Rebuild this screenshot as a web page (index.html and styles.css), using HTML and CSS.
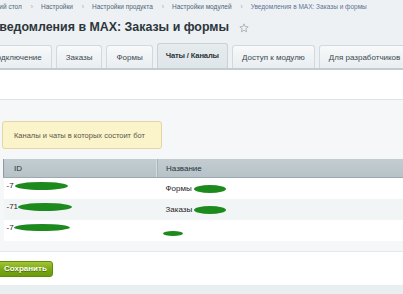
FILE: index.html
```html
<!DOCTYPE html>
<html lang="ru">
<head>
<meta charset="utf-8">
<title>Уведомления в MAX: Заказы и формы</title>
<link rel="stylesheet" href="styles.css">
</head>
<body>
<div class="page">
  <div class="breadcrumbs"><span class="crumb">Рабочий стол</span><span class="sep">›</span><span class="crumb">Настройки</span><span class="sep">›</span><span class="crumb">Настройки продукта</span><span class="sep">›</span><span class="crumb">Настройки модулей</span><span class="sep">›</span><span class="crumb last">Уведомления в MAX: Заказы и формы</span></div>
  <div class="title-row">
    <h1 class="title">Уведомления в MAX: Заказы и формы</h1>
    <svg class="star" viewBox="0 0 12 12" width="10" height="10"><path d="M6 1 L7.4 4.3 L11 4.6 L8.3 7 L9.1 10.6 L6 8.7 L2.9 10.6 L3.7 7 L1 4.6 L4.6 4.3 Z" fill="none" stroke="#9aa5ab" stroke-width="0.9" stroke-linejoin="round"/></svg>
  </div>
  <div class="tabs">
    <div class="tab">Подключение</div>
    <div class="tab">Заказы</div>
    <div class="tab">Формы</div>
    <div class="tab active">Чаты / Каналы</div>
    <div class="tab">Доступ к модулю</div>
    <div class="tab">Для разработчиков</div>
  </div>
  <div class="tab-top"></div>
  <div class="panel">
    <div class="note">Каналы и чаты в которых состоит бот</div>
    <table class="grid">
      <thead>
        <tr><th class="c-id">ID</th><th class="c-name">Название</th></tr>
      </thead>
      <tbody>
        <tr><td class="c-id">-7<span class="blob b-id1"></span></td><td class="c-name">Формы <span class="blob b-n1"></span></td></tr>
        <tr class="alt"><td class="c-id">-71<span class="blob b-id2"></span></td><td class="c-name">Заказы <span class="blob b-n2"></span></td></tr>
        <tr><td class="c-id">-7<span class="blob b-id3"></span></td><td class="c-name"><span class="blob b-n3"></span></td></tr>
      </tbody>
    </table>
  </div>
  <div class="footer">
    <button class="save" type="button">Сохранить</button>
  </div>
  <div class="bottom"></div>
</div>
</body>
</html>
```
FILE: styles.css
```css
html, body {
  margin: 0;
  padding: 0;
}
body {
  background: #edf1f3;
  font-family: "Liberation Sans", Arial, sans-serif;
  color: #2f3a40;
  overflow: hidden;
}
.page {
  width: 403px;
  height: 294px;
  overflow: hidden;
}
.breadcrumbs {
  display: flex;
  align-items: center;
  height: 16px;
  padding-bottom: 3px;
  box-sizing: border-box;
  margin-left: -19px;
  white-space: nowrap;
  font-size: 6.5px;
  color: #4f6579;
}
.crumb { flex: none; }
.crumb.last { color: #5d7396; }
.sep {
  flex: none;
  margin: 0 8px 0 9px;
  color: #9aa6ae;
  font-size: 6.5px;
}
.title-row {
  display: flex;
  align-items: center;
  height: 22px;
  margin-left: -8px;
  white-space: nowrap;
}
.title {
  margin: 0;
  font-size: 12.4px;
  font-weight: bold;
  color: #2c363c;
  line-height: 22px;
}
.star {
  margin-left: 10px;
  margin-top: 1px;
}
.tabs {
  display: flex;
  align-items: flex-end;
  gap: 4px;
  height: 30px;
  margin-left: -19px;
  white-space: nowrap;
}
.tab {
  height: 23px;
  box-sizing: border-box;
  padding: 0 9px;
  display: flex;
  align-items: center;
  font-size: 8px;
  color: #3c4850;
  background: linear-gradient(#f7f9fa, #e9eef0);
  border: 1px solid #d1d9dd;
  border-bottom: none;
  border-radius: 3px 3px 0 0;
  flex: none;
}
.tab.active {
  height: 25px;
  padding: 0 8px 2px 8px;
  font-size: 7.6px;
  letter-spacing: -0.15px;
  font-weight: bold;
  color: #2b353b;
  background: linear-gradient(#e6ebed, #dfe6e9);
  border-color: #c9d2d6;
}
.tab-top {
  height: 29px;
  background: #ffffff;
  border-top: 2px solid #c3cdd1;
  border-bottom: 1px solid #dde4e7;
}
.panel {
  background: #f5f7f8;
  padding: 21px 0 10px 2px;
  border-bottom: 1px solid #e3e8ea;
}
.note {
  width: 160px;
  height: 28px;
  box-sizing: border-box;
  background: #fbf3c9;
  border: 1px solid #e2d7a2;
  border-radius: 3px;
  font-size: 7.5px;
  color: #5a584a;
  padding-left: 11px;
  display: flex;
  align-items: center;
}
.grid {
  margin-top: 10px;
  margin-left: 1px;
  width: 420px;
  border-collapse: collapse;
  font-size: 8px;
}
.grid th {
  height: 18px;
  padding: 0;
  text-align: left;
  font-weight: normal;
  color: #26323a;
  background: linear-gradient(#c2ccd1, #b7c2c8);
  border-bottom: 1px solid #9ba9b0;
}
.grid th.c-id {
  width: 143px;
  padding-left: 10px;
  border-left: 1px solid #8e9ba2;
  border-right: 1px solid #a9b5bb;
  box-shadow: inset -1px 0 0 #d3dbdf;
}
.grid th.c-name {
  padding-left: 8px;
}
.grid td {
  height: 21px;
  padding: 0;
  color: #1f2326;
  background: #ffffff;
}
.grid tr.alt td { background: #f2f5f6; }
.grid td.c-id {
  padding-left: 3px;
  vertical-align: top;
  padding-top: 3px;
  box-sizing: border-box;
}
.grid td.c-name {
  padding-left: 8px;
  vertical-align: middle;
}
.blob {
  display: inline-block;
  background: #1d8a1d;
  border-radius: 50%;
  vertical-align: middle;
}
.b-id1 { width: 53px; height: 8px; margin-left: 1px; }
.b-id2 { width: 54px; height: 8px; margin-left: 0; }
.b-id3 { width: 56px; height: 7px; margin-left: 0; }
.b-n1 { width: 32px; height: 8px; }
.b-n2 { width: 32px; height: 8px; }
.b-n3 { width: 20px; height: 5px; margin-left: -3px; margin-top: 6px; }
.footer {
  height: 33px;
  background: #ffffff;
  display: flex;
  align-items: center;
}
.save {
  margin-left: -4px;
  height: 16px;
  padding: 0 5px 0 7px;
  font-family: "Liberation Sans", Arial, sans-serif;
  font-size: 8px;
  font-weight: bold;
  color: #ffffff;
  text-shadow: 0 1px 0 #4d7208;
  background: linear-gradient(#a2c534, #7aa613 55%, #6c9a0e);
  border: 1px solid #5f8c0b;
  border-radius: 3px;
  cursor: pointer;
}
.bottom {
  height: 20px;
  background: #e9eef0;
}
```
